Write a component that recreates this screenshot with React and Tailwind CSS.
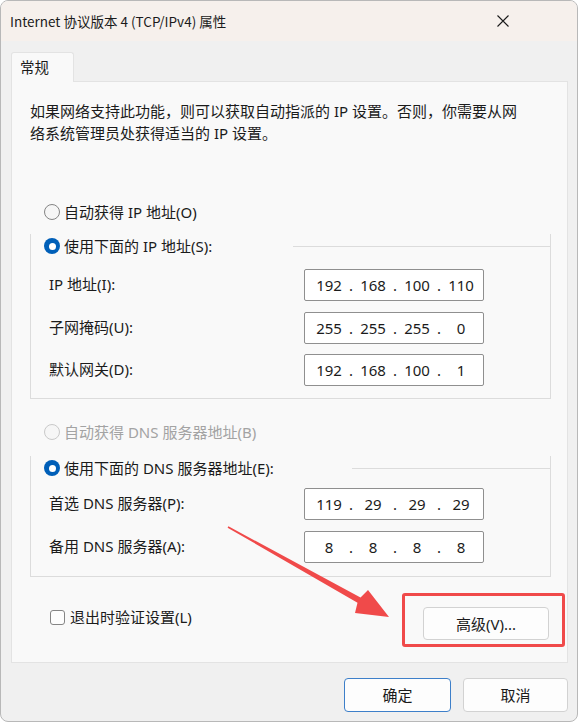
import { Fragment } from "react";

function Radio({ checked = false, disabled = false }) {
  if (checked) {
    return (
      <span className="w-4 h-4 rounded-full bg-[#005fb8] flex items-center justify-center shrink-0">
        <span className="w-[7px] h-[7px] rounded-full bg-white" />
      </span>
    );
  }
  return (
    <span
      className={`w-4 h-4 rounded-full border bg-[#f6f6f6] shrink-0 ${
        disabled ? "border-[#c9c9c9]" : "border-[#858585]"
      }`}
    />
  );
}

function IpBox({ parts }) {
  return (
    <div className="w-[180px] h-[32px] bg-white border border-[#8f8f8f] rounded-[2px] flex items-center pl-[7px] text-[15px] text-[#1b1b1b]">
      {parts.map((p, i) => (
        <Fragment key={i}>
          <span className="w-[34px] text-center">{p}</span>
          {i < 3 && <span className="w-[10px] text-center">.</span>}
        </Fragment>
      ))}
    </div>
  );
}

function FieldRow({ label, parts }) {
  return (
    <div className="flex items-center h-[32px]">
      <span className="w-[255px] pl-[18px] box-content -mt-[2px]">{label}</span>
      <IpBox parts={parts} />
    </div>
  );
}

export default function App() {
  return (
    <div className="relative w-[580px] h-[724px] bg-white font-['Noto_Sans','Noto_Sans_CJK_SC',sans-serif] text-[#1b1b1b]">
      <div className="w-[578px] h-[722px] rounded-[8px] border border-[#b8b8b8] bg-[#f0f0f0] overflow-hidden">
        {/* title bar */}
        <div className="h-[40px] bg-[#f6f0ec] flex items-center justify-between pl-[9px] pr-[68px]">
          <span className="text-[13.5px] leading-[20px] font-['Noto_Sans_CJK_SC',sans-serif]">
            Internet 协议版本 4 (TCP/IPv4) 属性
          </span>
          <svg width="12" height="12" viewBox="0 0 12 12" className="shrink-0">
            <path d="M0.5 0.5 L11.5 11.5 M11.5 0.5 L0.5 11.5" stroke="#1b1b1b" strokeWidth="1.1" />
          </svg>
        </div>

        <div className="pt-[11px] pl-[10px]">
          {/* tab */}
          <div className="relative z-10 -mb-px w-[63px] h-[30px] bg-[#f9f9f9] border-t border-x border-[#e3e3e3] rounded-t-[3px] pl-[8px] flex items-center text-[14.5px]">
            常规
          </div>

          {/* panel */}
          <div className="w-[557px] h-[582px] bg-[#f9f9f9] border border-[#e3e3e3] pl-[18px] pt-[18px] text-[15px] leading-[22px]">
            <p>
              如果网络支持此功能，则可以获取自动指派的 IP 设置。否则，你需要从网
              <br />
              络系统管理员处获得适当的 IP 设置。
            </p>

            <div className="mt-[57px] h-[22px] pl-[14px] flex items-center gap-[4px]">
              <Radio />
              <span>自动获得 IP 地址(O)</span>
            </div>

            {/* group 1 */}
            <div className="mt-[23px] w-[521px] border-x border-b border-[#dcdcdc] pb-[12px]">
              <div className="-mt-[12px] h-[24px] flex items-center">
                <div className="w-[262px] pl-[13px] flex items-center gap-[4px] shrink-0">
                  <Radio checked />
                  <span>使用下面的 IP 地址(S):</span>
                </div>
                <div className="flex-1 h-px bg-[#dcdcdc]" />
              </div>
              <div className="mt-[11px] flex flex-col gap-[10.5px]">
                <FieldRow label="IP 地址(I):" parts={["192", "168", "100", "110"]} />
                <FieldRow label="子网掩码(U):" parts={["255", "255", "255", "0"]} />
                <FieldRow label="默认网关(D):" parts={["192", "168", "100", "1"]} />
              </div>
            </div>

            <div className="mt-[22px] h-[22px] pl-[14px] flex items-center gap-[4px] text-[#a3a3a3]">
              <Radio disabled />
              <span>自动获得 DNS 服务器地址(B)</span>
            </div>

            {/* group 2 */}
            <div className="mt-[25px] w-[521px] border-x border-b border-[#dcdcdc] pb-[13px]">
              <div className="-mt-[12px] h-[24px] flex items-center">
                <div className="w-[321px] pl-[13px] flex items-center gap-[4px] shrink-0">
                  <Radio checked />
                  <span>使用下面的 DNS 服务器地址(E):</span>
                </div>
                <div className="flex-1 h-px bg-[#dcdcdc]" />
              </div>
              <div className="mt-[8px] flex flex-col gap-[11px]">
                <FieldRow label="首选 DNS 服务器(P):" parts={["119", "29", "29", "29"]} />
                <FieldRow label="备用 DNS 服务器(A):" parts={["8", "8", "8", "8"]} />
              </div>
            </div>

            <div className="mt-[30px] w-[521px] flex items-start justify-between pr-[2px]">
              <label className="ml-[20px] h-[20px] flex items-center gap-[5px]">
                <span className="w-[15px] h-[15px] rounded-[3px] border border-[#858585] bg-[#fdfdfd]" />
                <span>退出时验证设置(L)</span>
              </label>
              <button className="w-[126px] h-[33px] bg-[#fdfdfd] border border-[#d2d2d2] rounded-[4px] text-[15px]">
                高级(V)...
              </button>
            </div>
          </div>

          {/* dialog buttons */}
          <div className="mt-[15px] flex justify-end gap-[12px] pr-[9px] text-[15px]">
            <button className="w-[107px] h-[34px] bg-[#fdfdfd] border border-[#3d7fc9] rounded-[4px]">确定</button>
            <button className="w-[105px] h-[34px] bg-[#fdfdfd] border border-[#d2d2d2] rounded-[4px]">取消</button>
          </div>
        </div>
      </div>

      {/* annotation */}
      <div className="absolute left-[402px] top-[593px] w-[163px] h-[54px] border-[3px] border-[#f04a4a] rounded-[3px] pointer-events-none" />
      <svg className="absolute left-0 top-0 pointer-events-none" width="580" height="724" viewBox="0 0 580 724">
        <polygon
          points="228.4,526.3 360.5,597.6 368,590 389,617 355,613 357.5,602.8 227.6,527.7"
          fill="#f04a4a"
        />
      </svg>
    </div>
  );
}
